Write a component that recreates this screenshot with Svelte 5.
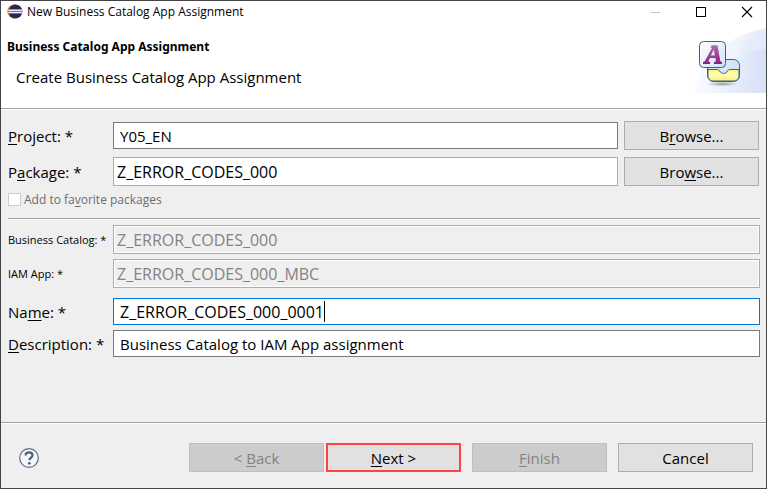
<script>
  let project = $state('Y05_EN');
  let pkg = $state('Z_ERROR_CODES_000');
  let favorite = $state(false);
  let catalog = $state('Z_ERROR_CODES_000');
  let iamApp = $state('Z_ERROR_CODES_000_MBC');
  let name = $state('Z_ERROR_CODES_000_0001');
  let description = $state('Business Catalog to IAM App assignment');
</script>

<div class="dialog">
  <header class="titlebar">
    <svg class="logo" viewBox="0 0 16 16" aria-hidden="true">
      <circle cx="7.2" cy="7.500" r="7" fill="#f6922e" />
      <circle cx="8.4" cy="7.500" r="7" fill="#2d2459" />
      <path d="M1.5 5.500h13.800M1.200 7.500h14M1.500 9.500h13.800" stroke="#8f87b5" stroke-width="0.8" />
      <path d="M1.2 6.400h14.100M1.200 8.500h14.100" stroke="#f2f0fa" stroke-width="1.1" />
    </svg>
    <span class="window-title">New Business Catalog App Assignment</span>
    <button class="win" aria-label="Minimize" disabled>
      <svg viewBox="0 0 12 12"><path d="M1 6.5h10" stroke="#c4c4c4" /></svg>
    </button>
    <button class="win" aria-label="Maximize">
      <svg viewBox="0 0 12 12"><rect x="1.5" y="1.5" width="9" height="9" fill="none" stroke="#000" /></svg>
    </button>
    <button class="win close" aria-label="Close">
      <svg viewBox="0 0 12 12"><path d="M1 1l10 10M11 1L1 11" fill="none" stroke="#000" stroke-width="1.1" /></svg>
    </button>
  </header>

  <section class="banner">
    <div class="heading">
      <h1>Business Catalog App Assignment</h1>
      <p>Create Business Catalog App Assignment</p>
    </div>
    <svg class="art" viewBox="0 0 75 66" aria-hidden="true">
      <defs>
        <linearGradient id="sky" x1="0" y1="0" x2="1" y2="0.3">
          <stop offset="0" stop-color="#ffffff" />
          <stop offset="0.4" stop-color="#f5f8fe" />
          <stop offset="1" stop-color="#e2eafa" />
        </linearGradient>
        <linearGradient id="wave" x1="0" y1="0" x2="1" y2="0">
          <stop offset="0" stop-color="#e4ecfa" stop-opacity="0" />
          <stop offset="1" stop-color="#d3def5" />
        </linearGradient>
        <linearGradient id="tile" x1="0" y1="0" x2="1" y2="1">
          <stop offset="0" stop-color="#ffffff" />
          <stop offset="1" stop-color="#cfe1f3" />
        </linearGradient>
        <linearGradient id="tray" x1="0" y1="0" x2="0" y2="1">
          <stop offset="0" stop-color="#fff66e" />
          <stop offset="0.5" stop-color="#fffbb8" />
          <stop offset="1" stop-color="#fff06a" />
        </linearGradient>
        <linearGradient id="letter" x1="0" y1="0" x2="0" y2="1">
          <stop offset="0" stop-color="#b06cae" />
          <stop offset="1" stop-color="#8d1c88" />
        </linearGradient>
        <radialGradient id="shade">
          <stop offset="0" stop-color="#777" stop-opacity="0.7" />
          <stop offset="1" stop-color="#777" stop-opacity="0" />
        </radialGradient>
      </defs>
      <path d="M4 65C6 38 30 9 75 0v65z" fill="url(#sky)" />
      <path d="M20 65C25 40 45 25 75 21v44z" fill="url(#wave)" opacity="0.7" />
      <path d="M50 20C57 11 65 5 75 0v21C65 22 57 25 50 28z" fill="#e2eafa" opacity="0.5" />
      <ellipse cx="31" cy="56" rx="16" ry="2.5" fill="url(#shade)" />
      <rect x="16.5" y="31.5" width="32" height="22" rx="6" fill="#d3e6f6" stroke="#34668d" />
      <path d="M17 41.5h9.500c1 0 1.500.6 2 1.500 2 3.200 6.500 3.200 8 0 .5-.9 1-1.500 2-1.500H48v6c0 3.500-2 5.500-5.500 5.500h-20c-3.500 0-5.500-2-5.500-5.500z" fill="url(#tray)" stroke="#34668d" />
      <rect x="8.500" y="13.500" width="26" height="26" rx="4" fill="url(#tile)" stroke="#34668d" />
      <path d="M21 17h5.500l2.800 16.500 1.700.5v1.500h-8V34l2-.5-.5-4h-5.500l-1.500 4 2 .5v1.500h-7V34l1.700-.5 7.300-14.500-1.500-.5zM22.800 21l-3 6.500h4.200z" fill="#8a9bb0" opacity="0.5" />
      <path fill-rule="evenodd" d="M20.500 17.500H26.500l2.800 16 1.700.5V36h-8v-2l2-.5-.5-3.500h-5.500L17 33.500l2 .5v2h-7v-2l1.700-.5L21 20l-1.500-.5zM22.800 21.500l-3 6h4.200z" fill="url(#letter)" />
    </svg>
  </section>

  <main>
    <div class="group top">
      <div class="row">
        <label for="project"><u>P</u>roject: *</label>
        <input id="project" class="inset" bind:value={project} />
        <button class="btn">B<u>r</u>owse...</button>
      </div>
      <div class="row">
        <label for="package">P<u>a</u>ckage: *</label>
        <input id="package" class="soft code" bind:value={pkg} />
        <button class="btn">Bro<u>w</u>se...</button>
      </div>
      <div class="check">
        <input id="favorite" type="checkbox" bind:checked={favorite} disabled />
        <label for="favorite">Add to fa<u>v</u>orite packages</label>
      </div>
    </div>

    <hr />

    <div class="group">
      <div class="row small">
        <label for="catalog">Business Catalog: *</label>
        <input id="catalog" class="soft code" bind:value={catalog} disabled />
      </div>
      <div class="row small">
        <label for="iam">IAM App: *</label>
        <input id="iam" class="soft code" bind:value={iamApp} disabled />
      </div>
    </div>

    <div class="group bottom">
      <div class="row">
        <label for="name">Na<u>m</u>e: *</label>
        <div class="field">
          <input id="name" class="inset active code" bind:value={name} />
          <span class="caret"></span>
        </div>
      </div>
      <div class="row">
        <label for="description"><u>D</u>escription: *</label>
        <input id="description" class="inset" bind:value={description} />
      </div>
    </div>
  </main>

  <footer>
    <button class="help" aria-label="Help">
      <svg viewBox="0 0 20 20">
        <circle cx="10" cy="10" r="9.300" fill="#f7f8fa" stroke="#5b6d8e" stroke-width="1.200" />
        <path d="M6.600 7.600C6.600 5.300 8 4.300 10 4.300s3.500 1.100 3.500 3c0 2.300-3.100 2.500-3.100 5" fill="none" stroke="#4c6087" stroke-width="2.200" />
        <circle cx="10.300" cy="15.300" r="1.400" fill="#4c6087" />
      </svg>
    </button>
    <div class="pair">
      <button class="btn" disabled>&lt; <u>B</u>ack</button>
      <button class="btn next"><u>N</u>ext &gt;</button>
    </div>
    <button class="btn" disabled><u>F</u>inish</button>
    <button class="btn">Cancel</button>
  </footer>
</div>

<style>
  .dialog {
    box-sizing: border-box;
    min-height: 100vh;
    display: flex;
    flex-direction: column;
    border: 1px solid #444446;
    background: #efefef;
    color: #000;
    font: 15px/20px 'Open Sans', 'Noto Sans', sans-serif;
  }
  button,
  input {
    box-sizing: border-box;
    margin: 0;
    font: inherit;
    color: inherit;
    border-radius: 0;
  }
  u {
    text-decoration-thickness: 1px;
    text-underline-offset: 2px;
    text-decoration-skip-ink: none;
  }
  .titlebar {
    display: flex;
    align-items: center;
    height: 21px;
    padding-left: 6px;
    background: #fff;
  }
  .logo {
    width: 16px;
    height: 16px;
  }
  .window-title {
    flex: 1;
    margin-left: 4px;
    font-size: 12px;
  }
  .win {
    display: grid;
    place-items: center;
    width: 46px;
    height: 21px;
    padding: 0;
    border: 0;
    background: none;
  }
  .close {
    width: 38px;
    margin-left: 4px;
  }
  .win svg {
    width: 12px;
    height: 12px;
  }
  .banner {
    display: flex;
    justify-content: space-between;
    height: 86px;
    background: #fff;
    border-bottom: 1px solid #a0a0a0;
    box-shadow: 0 1px #fff;
  }
  .heading {
    padding: 15px 0 0 6px;
  }
  h1 {
    margin: 0;
    font: 700 12px/20px 'Noto Sans', 'Open Sans', sans-serif;
  }
  .heading p {
    margin: 10px 0 0 9px;
  }
  .art {
    width: 75px;
    height: 66px;
    margin-top: 6px;
  }
  main {
    flex: 1;
    padding: 12px 6px 0 7px;
  }
  .group {
    display: flex;
    flex-direction: column;
    gap: 5px;
  }
  .top {
    gap: 7px;
    padding-right: 1px;
  }
  .bottom {
    margin-top: 10px;
  }
  .row {
    display: flex;
    align-items: center;
  }
  .row > label {
    flex: none;
    width: 105px;
    white-space: nowrap;
  }
  .small > label {
    font-size: 11px;
  }
  .row > input,
  .field {
    flex: 1;
    min-width: 0;
  }
  .row input {
    background: #fff;
    outline: 0;
  }
  .soft {
    height: 29px;
    padding: 0 3px;
    border: 1px solid #abadb3;
  }
  .row input.soft:disabled {
    background: #efefef;
    color: #838383;
    box-shadow: inset 0 0 0 1px #fff;
  }
  .inset {
    height: 27px;
    padding: 0 6px;
    border: 1px solid #7a7a7a;
  }
  .code {
    font-size: 16px;
  }
  .active {
    display: block;
    width: 100%;
    border-color: #0078d7;
  }
  .field {
    position: relative;
  }
  .caret {
    position: absolute;
    left: 211px;
    top: 3px;
    width: 1px;
    height: 21px;
    background: #000;
  }
  .btn {
    flex: none;
    width: 135px;
    height: 29px;
    padding: 0;
    border: 1px solid #adadad;
    background: #e1e1e1;
    text-align: center;
  }
  .btn:disabled {
    background: #ccc;
    border-color: #bfbfbf;
    color: #838383;
  }
  .row .btn {
    margin-left: 6px;
  }
  .check {
    display: flex;
    align-items: center;
    gap: 3px;
    height: 13px;
    color: #6d6d6d;
    font-size: 12px;
  }
  .check input {
    appearance: none;
    width: 13px;
    height: 13px;
    border: 1px solid #ccc;
    background: #fff;
  }
  hr {
    height: 1px;
    margin: 12px 0 6px;
    border: 0;
    background: #a0a0a0;
    box-shadow: 0 1px #fff;
  }
  footer {
    display: flex;
    align-items: center;
    gap: 11px;
    padding: 20px 13px 16px 18px;
    border-top: 1px solid #a0a0a0;
    box-shadow: inset 0 1px #fff;
  }
  .help {
    width: 20px;
    height: 20px;
    margin-right: auto;
    padding: 0;
    border: 0;
    background: none;
  }
  .help svg {
    display: block;
    width: 20px;
    height: 20px;
    overflow: visible;
  }
  .pair {
    display: flex;
    gap: 2px;
  }
  .next {
    border: 2px solid #ff4343;
  }
</style>
